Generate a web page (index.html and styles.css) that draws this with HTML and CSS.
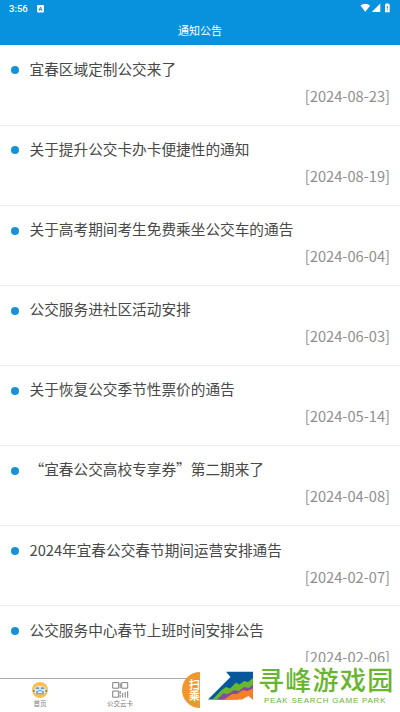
FILE: index.html
```html
<!DOCTYPE html>
<html lang="zh-CN">
<head>
<meta charset="utf-8">
<title>通知公告</title>
<link rel="stylesheet" href="styles.css">
</head>
<body>
<div class="screen">
  <header class="header">
    <div class="status">
      <span class="time">3:56</span>
      <svg class="app-badge" width="7" height="8" viewBox="0 0 7 8"><rect width="7" height="7.6" rx="1" fill="#fff"/><path d="M2 5.8 3.5 2 5 5.8M2.5 4.6h2" fill="none" stroke="#0892dd" stroke-width=".9"/></svg>
      <svg class="signals" width="31" height="11" viewBox="0 0 31 11"><path d="M.5 2.6Q5.3-1 10.100 2.600L5.300 9z" fill="#fff"/><path d="M20.300 .6V9H11.800z" fill="#fff"/><path d="M26.200.2h2.200v1h1.300V9.200h-4.700V1.200h1.200z" fill="#fff"/><path d="M27.300 2.800v2.800M27.300 6.400v1" stroke="#0892dd" stroke-width="1"/></svg>
    </div>
    <h1 class="title">通知公告</h1>
  </header>
  <main class="list">
    <article class="item"><h2 class="name">宜春区域定制公交来了</h2><time class="date">[2024-08-23]</time></article>
    <article class="item"><h2 class="name">关于提升公交卡办卡便捷性的通知</h2><time class="date">[2024-08-19]</time></article>
    <article class="item"><h2 class="name">关于高考期间考生免费乘坐公交车的通告</h2><time class="date">[2024-06-04]</time></article>
    <article class="item"><h2 class="name">公交服务进社区活动安排</h2><time class="date">[2024-06-03]</time></article>
    <article class="item"><h2 class="name">关于恢复公交季节性票价的通告</h2><time class="date">[2024-05-14]</time></article>
    <article class="item"><h2 class="name">“宜春公交高校专享券”第二期来了</h2><time class="date">[2024-04-08]</time></article>
    <article class="item"><h2 class="name">2024年宜春公交春节期间运营安排通告</h2><time class="date">[2024-02-07]</time></article>
    <article class="item"><h2 class="name">公交服务中心春节上班时间安排公告</h2><time class="date">[2024-02-06]</time></article>
  </main>
  <nav class="tabs">
    <div class="tab">
      <svg width="16" height="16" viewBox="0 0 16 16"><circle cx="8" cy="8" r="8" fill="#f9c04e"/><path d="M3 5Q8 3 13 5L14 9 12.800 11.500H3.200L2 9z" fill="#e9f1f8"/><path d="M4 5.300h3.300v2H3.500zM8.700 5.300H12l.5 2H8.700z" fill="#7d98b5"/><path d="M2 8v2M14 8v2M4 9.800h2M10 9.800h2" stroke="#57799d" stroke-width="1.200"/><path d="M6 8.800h4M4 11.700h8" stroke="#4aa5e0"/></svg>
      <span>首页</span>
    </div>
    <div class="tab">
      <svg width="17" height="16" viewBox="0 0 17 16" fill="none" stroke="#808080" stroke-width="1"><path d="M.7.600h6v5.600h-6zM9.700.600h6v5.600h-6zM.7 9h6v6.200h-6zM8.200 1v5.200M8.200 9v3M8.200 13V15.500M10.700 11v4.700M13.200 10v5.700M15.700 9v6.700"/></svg>
      <span>公交云卡</span>
    </div>
  </nav>
  <div class="scan"><span>扫码<br>乘车</span></div>
  <aside class="brand">
    <svg class="peak" width="46" height="30" viewBox="0 0 46 30"><path d="M18 .8H45V20H30L15 28.500H0L22.500 6z" fill="#07589a"/><path d="M45 7 40 11 36 10 31.500 13.500 28 11.500 22 17.500 18 16 13 19.500 4.500 28.500H20L45 20z" fill="#66b82e"/><path d="M45 13.500 41 17 36 16 31 20 26 19 20 23 15 22.500 9 28.500H30L45 21z" fill="#8c489c"/><path d="M45 17.500 39 20 35 19 29 23 24 23 16 28.500H34L40.500 25 45 29z" fill="#f5802a"/></svg>
    <div class="wordmark"><strong>寻峰游戏园</strong><small>PEAK SEARCH GAME PARK</small></div>
  </aside>
</div>
</body>
</html>
```

FILE: styles.css
```css
* { box-sizing: border-box; }
body { margin: 0; background: #fff; font-family: "Noto Sans CJK SC", sans-serif; }
.screen { position: relative; width: 400px; height: 712px; overflow: hidden; display: flex; flex-direction: column; }
.header { height: 45px; flex: none; background: #0892dd; color: #fff; }
.status { height: 17px; padding: 0 9px 0 9px; display: flex; align-items: center; }
.time { font: 500 9.5px/17px Roboto, sans-serif; width: 28px; }
.signals { margin-left: auto; margin-top: 0; }
.title { margin: 0; font-size: 11px; font-weight: 400; line-height: 26px; text-align: center; }
.list { height: 617px; flex: none; overflow: hidden; padding-top: .4px; }
.item { height: 80.15px; border-bottom: 1px solid #eee; padding: 11.4px 10px 0; display: flex; flex-direction: column; }
.name { margin: 0; display: flex; align-items: center; font-size: 14.67px; line-height: 24px; font-weight: 400; color: #484848; white-space: nowrap; }
.name::before { content: ""; width: 8px; height: 8px; border-radius: 50%; background: #1592d4; margin: 3px 11px 0 .5px; flex: none; }
.date { align-self: flex-end; margin-top: 3px; font-size: 14.67px; line-height: 24px; color: #8f8f8f; }
.tabs { margin-top: 16px; height: 34px; border-top: 1px solid #aaa; display: flex; padding-top: 3px; }
.tab { width: 80px; display: flex; flex-direction: column; align-items: center; font-size: 6.5px; line-height: 10px; color: #808080; }
.scan { position: absolute; left: 182px; top: 672px; width: 36px; height: 36px; border-radius: 50%; background: #f0972b; color: #fff; display: flex; align-items: center; justify-content: center; font-size: 11px; line-height: 11px; font-weight: 700; }
.brand { position: absolute; left: 200px; top: 662px; width: 200px; height: 50px; background: #fff; display: flex; }
.peak { margin: 9px 0 0 8px; flex: none; }
.wordmark { margin-left: 4px; display: flex; flex-direction: column; color: #68b52e; white-space: nowrap; }
.wordmark strong { font-size: 26px; line-height: 32px; font-weight: 500; letter-spacing: 1.3px; margin-top: 1px; }
.wordmark small { font: 8px/10px "Liberation Sans", sans-serif; margin: 1px 0 0 6px; letter-spacing: .77px; }
```
